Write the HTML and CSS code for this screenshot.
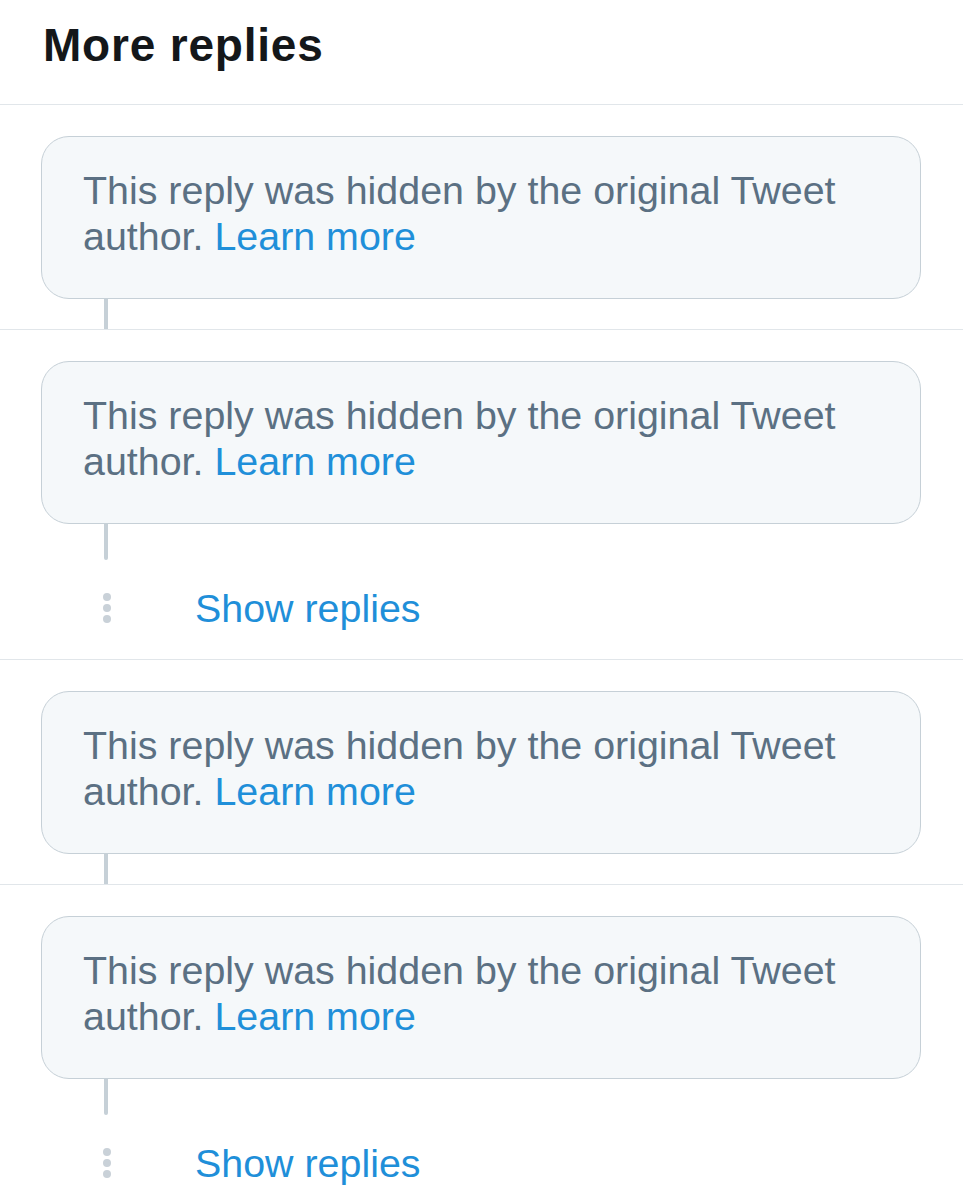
FILE: index.html
```html
<!DOCTYPE html>
<html>
<head>
<meta charset="utf-8">
<link rel="stylesheet" href="styles.css">
</head>
<body>
<div class="page">
  <header class="head"><h1 class="title">More replies</h1></header>

  <section class="reply">
    <div class="card">This reply was hidden by the original Tweet author. <a class="link">Learn more</a></div>
    <div class="thread short"></div>
  </section>

  <section class="reply">
    <div class="card">This reply was hidden by the original Tweet author. <a class="link">Learn more</a></div>
    <div class="thread long"></div>
    <div class="more">
      <div class="dots"><span></span><span></span><span></span></div>
      <a class="link">Show replies</a>
    </div>
  </section>

  <section class="reply">
    <div class="card">This reply was hidden by the original Tweet author. <a class="link">Learn more</a></div>
    <div class="thread short"></div>
  </section>

  <section class="reply">
    <div class="card">This reply was hidden by the original Tweet author. <a class="link">Learn more</a></div>
    <div class="thread long"></div>
    <div class="more">
      <div class="dots"><span></span><span></span><span></span></div>
      <a class="link">Show replies</a>
    </div>
  </section>
</div>
</body>
</html>
```

FILE: styles.css
```css
html, body {
  margin: 0;
  padding: 0;
  background: #ffffff;
}
body {
  font-family: "Liberation Sans", Arial, sans-serif;
  -webkit-font-smoothing: antialiased;
}
.page {
  width: 963px;
  height: 1200px;
  overflow: hidden;
}
.head {
  height: 104px;
  border-bottom: 1px solid #e1e6ea;
  box-sizing: content-box;
  padding-left: 43px;
}
.title {
  margin: 0;
  padding-top: 17px;
  font-size: 46px;
  line-height: 56px;
  font-weight: 700;
  color: #14171a;
  letter-spacing: 0.8px;
}
.reply {
  padding: 31px 42px 0 41px;
  border-bottom: 1px solid #e1e6ea;
}
.card {
  background: #f5f8fa;
  border: 1px solid #c6d0d7;
  border-radius: 28px;
  padding: 30px 40px 39px 41px;
  font-size: 39.4px;
  line-height: 46px;
  color: #5b7083;
}
.link {
  color: #1f8fd9;
  text-decoration: none;
}
.thread {
  width: 4px;
  margin-left: 63px;
  background: #c6d0d7;
}
.thread.short {
  height: 30px;
}
.thread.long {
  height: 36px;
  border-radius: 0 0 3px 3px;
}
.more {
  display: flex;
  align-items: center;
  padding: 25px 0 28px 0;
  font-size: 39.4px;
  line-height: 46px;
}
.dots {
  display: flex;
  flex-direction: column;
  gap: 3px;
  margin-left: 62px;
  width: 8px;
  margin-right: 84px;
}
.dots span {
  display: block;
  width: 8px;
  height: 8px;
  border-radius: 50%;
  background: #c9d1d8;
}
```
